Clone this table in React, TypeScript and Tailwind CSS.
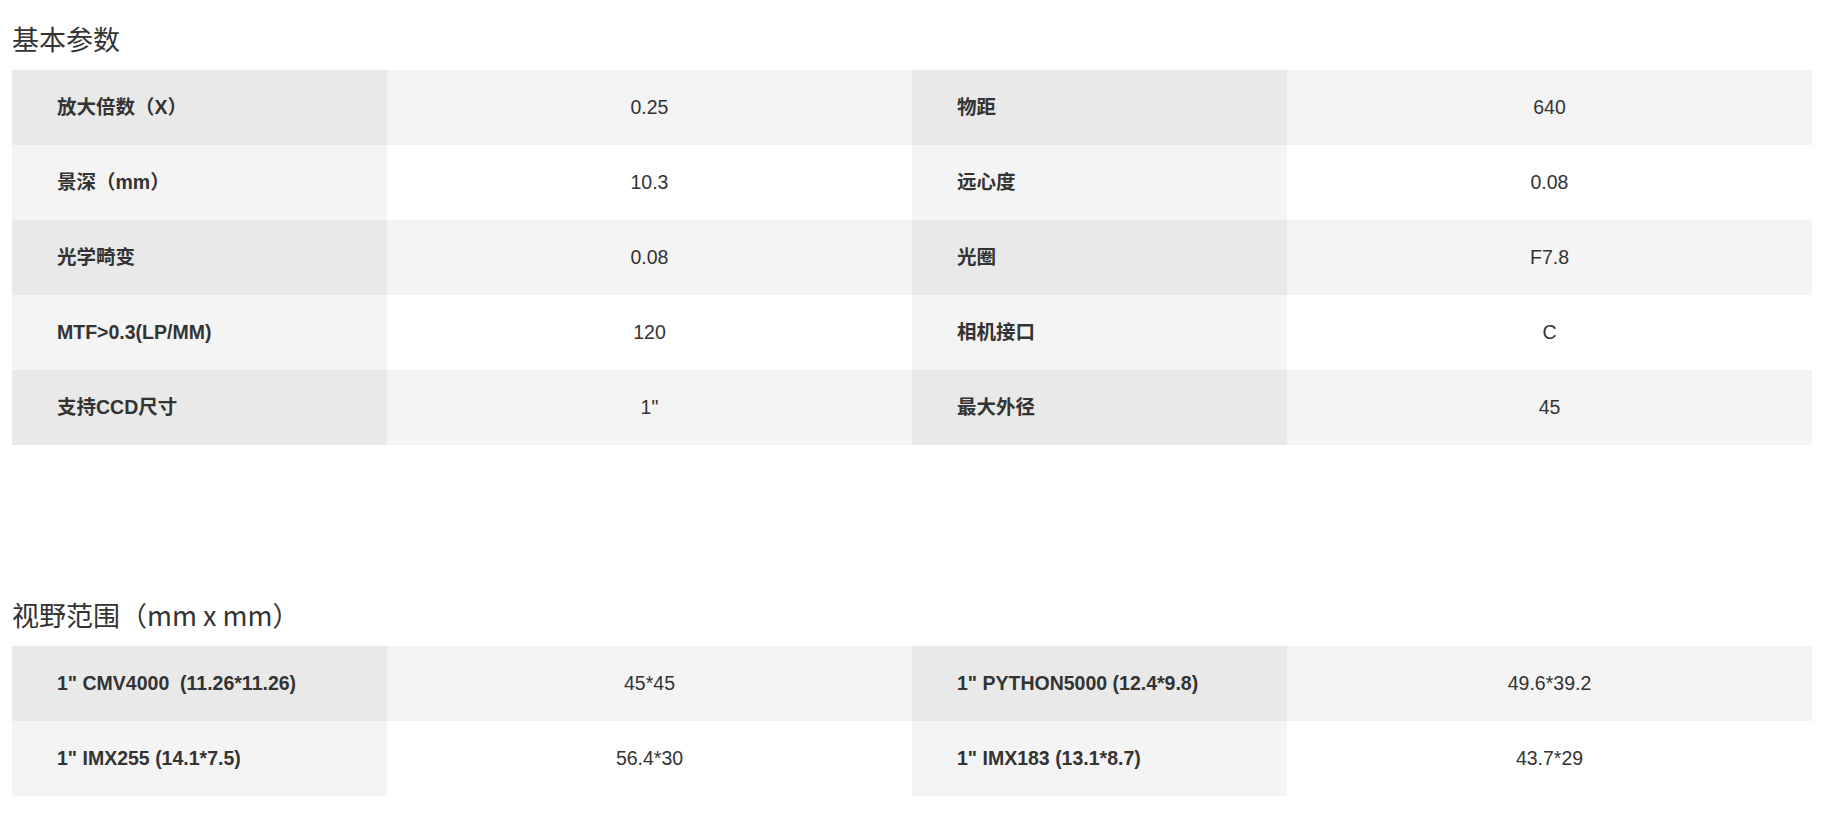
type Row = [string, string, string, string];

const basic: Row[] = [
  ["放大倍数（X）", "0.25", "物距", "640"],
  ["景深（mm）", "10.3", "远心度", "0.08"],
  ["光学畸变", "0.08", "光圈", "F7.8"],
  ["MTF>0.3(LP/MM)", "120", "相机接口", "C"],
  ["支持CCD尺寸", '1"', "最大外径", "45"],
];

const fov: Row[] = [
  ['1" CMV4000  (11.26*11.26)', "45*45", '1" PYTHON5000 (12.4*9.8)', "49.6*39.2"],
  ['1" IMX255 (14.1*7.5)', "56.4*30", '1" IMX183 (13.1*8.7)', "43.7*29"],
];

const bodyFont = {
  fontFamily: '"Liberation Sans", "Noto Sans CJK SC", sans-serif',
};

const Title = ({ children }: { children: string }) => (
  <div
    className="h-[70px] pt-[8px] flex items-center text-[27px] text-[#333] font-normal"
    style={{ fontFamily: '"Noto Sans CJK SC", "Liberation Sans", sans-serif' }}
  >
    {children}
  </div>
);

const ParamTable = ({ rows }: { rows: Row[] }) => {
  return (
    <div className="w-[1800px]" style={bodyFont}>
      {rows.map((row, key) => {
        const odd = key % 2 === 0;
        const labelBg = odd ? "bg-[#e9e9e9]" : "bg-[#f4f4f4]";
        const valueBg = odd ? "bg-[#f4f4f4]" : "bg-white";
        return (
          <div
            key={key}
            className="grid grid-cols-[375px_525px_375px_525px] h-[75px] text-[19.5px] text-[#333]"
          >
            <div className={`flex items-center pl-[45px] font-bold whitespace-pre ${labelBg}`}>
              {row[0]}
            </div>
            <div className={`flex items-center justify-center ${valueBg}`}>
              {row[1]}
            </div>
            <div className={`flex items-center pl-[45px] font-bold whitespace-pre ${labelBg}`}>
              {row[2]}
            </div>
            <div className={`flex items-center justify-center ${valueBg}`}>
              {row[3]}
            </div>
          </div>
        );
      })}
    </div>
  );
};

export default function App() {
  return (
    <div className="min-h-[813px] bg-white pl-[12px]">
      <Title>基本参数</Title>
      <ParamTable rows={basic} />
      <div className="mt-[131px]">
        <Title>视野范围（mm x mm）</Title>
      </div>
      <ParamTable rows={fov} />
    </div>
  );
}
